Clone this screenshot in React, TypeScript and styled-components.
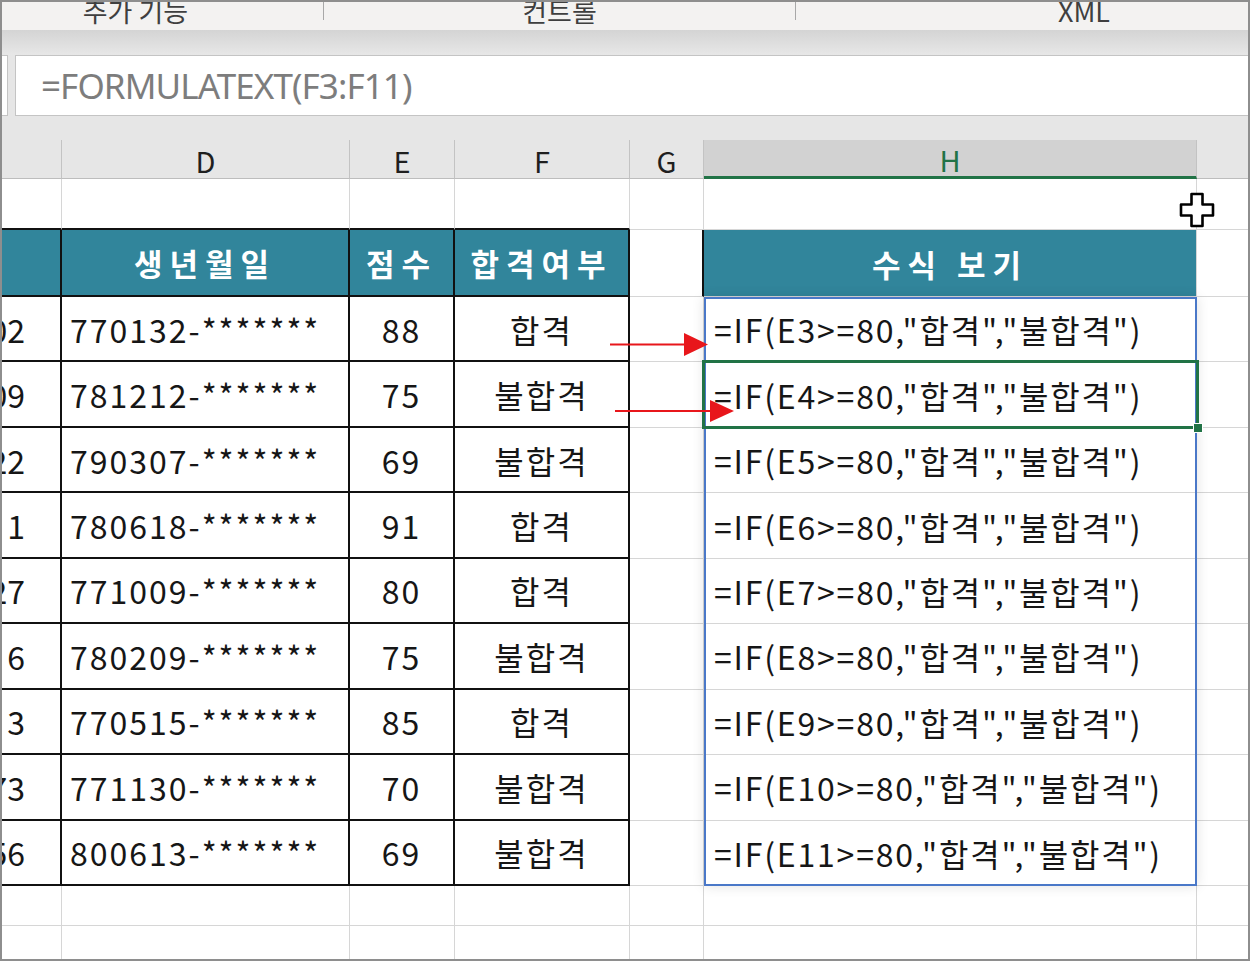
import React from 'react';
import styled, { createGlobalStyle } from 'styled-components';

const GlobalStyle = createGlobalStyle`
  html, body { margin: 0; padding: 0; background: #fff; }
  body {
    width: 1250px; height: 961px; overflow: hidden;
    font-family: "Noto Sans CJK KR", "Noto Sans", sans-serif;
  }
  * { box-sizing: border-box; }
`;

const Frame = styled.div`
  width: 1250px;
  height: 961px;
  border: 2px solid #8e8e8e;
  display: flex;
  flex-direction: column;
  overflow: hidden;
  background: #fff;
`;

const Ribbon = styled.div`
  height: 28px;
  flex: none;
  display: flex;
  background: #f3f2f1;
  overflow: hidden;
`;

const RibbonGroup = styled.div<{ $w?: number; $padL?: number; $padR?: number }>`
  flex: ${p => (p.$w ? `0 0 ${p.$w}px` : '1')};
  display: flex;
  justify-content: center;
  align-items: flex-end;
  padding-left: ${p => p.$padL ?? 0}px;
  padding-right: ${p => p.$padR ?? 0}px;
`;

const RibbonLabel = styled.span`
  font-family: "Noto Sans CJK KR", sans-serif;
  font-size: 27px;
  line-height: 1;
  color: #3f3f3f;
  margin-bottom: 6px;
  white-space: nowrap;
`;

const RibbonSep = styled.div`
  flex: none;
  width: 1px;
  height: 18px;
  background: #a8a8a8;
`;

const ToolShade = styled.div`
  height: 25px;
  flex: none;
  background: linear-gradient(#d4d4d4, #e7e7e7);
`;

const FormulaRow = styled.div`
  height: 61px;
  flex: none;
  display: flex;
  gap: 7px;
  background: #e6e6e6;
`;

const NameBoxStub = styled.div`
  width: 6px;
  background: #fff;
  border: 1px solid #c4c4c4;
  border-left: none;
`;

const FormulaBox = styled.div`
  flex: 1;
  display: flex;
  align-items: center;
  background: #fff;
  border: 1px solid #c4c4c4;
  border-right: none;
  padding-left: 25px;
  font-family: "Noto Sans", sans-serif;
  font-size: 35px;
  letter-spacing: -0.9px;
  color: #7d7d7d;
`;

const Gap = styled.div`
  height: 24px;
  flex: none;
  background: #e6e6e6;
`;

const Sheet = styled.div`
  flex: 1;
  position: relative;
  display: grid;
  grid-template-columns: 60px 288px 105px 175px 74px 493px 1fr;
  grid-template-rows: 39px 51px 67px repeat(9, 65.44px) 40px 1fr;
  background: #e6e6e6;
`;

const ColHead = styled.div<{ $col: number; $active?: boolean; $last?: boolean }>`
  grid-row: 1;
  grid-column: ${p => p.$col};
  display: flex;
  align-items: center;
  justify-content: center;
  background: ${p => (p.$active ? '#d2d2d2' : '#e6e6e6')};
  color: ${p => (p.$active ? '#217346' : '#1f1f1f')};
  border-right: ${p => (p.$last ? 'none' : '1px solid #c3c3c3')};
  border-bottom: ${p => (p.$active ? '3px solid #217346' : '1px solid #bdbdbd')};
  font-size: 29px;
  line-height: 1;
  padding-top: 2px;
`;

type Line = 'grid' | 'bold' | 'none';
const lineCss = (l: Line | undefined) =>
  l === 'bold' ? '2px solid #111' : l === 'none' ? 'none' : '1px solid #d6d6d6';

const Cell = styled.div<{
  $row: number;
  $col: number;
  $align?: 'left' | 'center' | 'right';
  $head?: boolean;
  $right?: Line;
  $bottom?: Line;
  $padL?: number;
  $padR?: number;
  $spacing?: number;
}>`
  grid-row: ${p => p.$row};
  grid-column: ${p => p.$col};
  display: flex;
  align-items: center;
  justify-content: ${p =>
    p.$align === 'left' ? 'flex-start' : p.$align === 'right' ? 'flex-end' : 'center'};
  overflow: hidden;
  white-space: nowrap;
  background: ${p => (p.$head ? '#31859b' : '#fff')};
  color: ${p => (p.$head ? '#fff' : '#161616')};
  font-weight: ${p => (p.$head ? 700 : 400)};
  font-size: ${p => (p.$head ? 31 : 32)}px;
  letter-spacing: ${p => (p.$spacing ?? (p.$head ? 7 : 2))}px;
  border-right: ${p => lineCss(p.$right)};
  border-bottom: ${p => lineCss(p.$bottom)};
  padding-left: ${p => p.$padL ?? 0}px;
  padding-right: ${p => p.$padR ?? 0}px;
  line-height: 1;
`;

const CellText = styled.span`
  flex: none;
  white-space: pre;
`;

const RangeBox = styled.div`
  grid-column: 6 / 7;
  grid-row: 4 / 13;
  border: 2px solid #4a78c8;
  box-shadow: 0 0 12px rgba(0, 0, 0, 0.12);
  pointer-events: none;
  z-index: 1;
`;

const Selection = styled.div`
  grid-column: 6 / 7;
  grid-row: 5 / 6;
  margin: -2px -2px -1px -2px;
  border: 3px solid #217346;
  position: relative;
  pointer-events: none;
  z-index: 2;
`;

const FillHandle = styled.div`
  position: absolute;
  right: -7px;
  bottom: -7px;
  width: 10px;
  height: 10px;
  background: #217346;
  border: 1px solid #fff;
`;

const Arrows = styled.svg`
  position: absolute;
  left: 598px;
  top: 190px;
  z-index: 3;
  pointer-events: none;
`;

const Cursor = styled.svg`
  position: absolute;
  left: 1176px;
  top: 51px;
  z-index: 3;
  pointer-events: none;
`;

const rows = [
  ['002', '770132-*******', '88', '합격', 'E3'],
  ['009', '781212-*******', '75', '불합격', 'E4'],
  ['022', '790307-*******', '69', '불합격', 'E5'],
  ['  1', '780618-*******', '91', '합격', 'E6'],
  ['027', '771009-*******', '80', '합격', 'E7'],
  ['  6', '780209-*******', '75', '불합격', 'E8'],
  ['  3', '770515-*******', '85', '합격', 'E9'],
  ['073', '771130-*******', '70', '불합격', 'E10'],
  ['056', '800613-*******', '69', '불합격', 'E11'],
];

const cols = ['', 'D', 'E', 'F', 'G', 'H', ''];

export default function App() {
  return (
    <>
      <GlobalStyle />
      <Frame>
        <Ribbon>
          <RibbonGroup $w={321} $padR={54}>
            <RibbonLabel>추가 기능</RibbonLabel>
          </RibbonGroup>
          <RibbonSep />
          <RibbonGroup $w={471}>
            <RibbonLabel>컨트롤</RibbonLabel>
          </RibbonGroup>
          <RibbonSep />
          <RibbonGroup $padL={124}>
            <RibbonLabel>XML</RibbonLabel>
          </RibbonGroup>
        </Ribbon>
        <ToolShade />
        <FormulaRow>
          <NameBoxStub />
          <FormulaBox>=FORMULATEXT(F3:F11)</FormulaBox>
        </FormulaRow>
        <Gap />
        <Sheet>
          {cols.map((c, i) => (
            <ColHead key={`h${i}`} $col={i + 1} $active={c === 'H'} $last={i === cols.length - 1}>
              {c}
            </ColHead>
          ))}

          {/* row 1 */}
          {cols.map((_, i) => (
            <Cell
              key={`r1${i}`}
              $row={2}
              $col={i + 1}
              $bottom={i <= 3 ? 'bold' : 'grid'}
              $right={i === 6 ? 'none' : 'grid'}
            />
          ))}

          {/* row 2: table headers */}
          <Cell $row={3} $col={1} $head $right="bold" $bottom="bold" />
          <Cell $row={3} $col={2} $head $right="bold" $bottom="bold">생년월일</Cell>
          <Cell $row={3} $col={3} $head $right="bold" $bottom="bold">점수</Cell>
          <Cell $row={3} $col={4} $head $right="bold" $bottom="bold">합격여부</Cell>
          <Cell $row={3} $col={5} $right="bold" />
          <Cell $row={3} $col={6} $head>수식 보기</Cell>
          <Cell $row={3} $col={7} $right="none" />

          {rows.map(([c, d, e, f, ref], i) => {
            const r = i + 4;
            return (
              <React.Fragment key={ref}>
                <Cell
                  $row={r}
                  $col={1}
                  $align="right"
                  $padR={35}
                  $spacing={0}
                  $right="bold"
                  $bottom="bold"
                >
                  <CellText>{c}</CellText>
                </Cell>
                <Cell $row={r} $col={2} $align="left" $padL={8} $right="bold" $bottom="bold">
                  <CellText>{d}</CellText>
                </Cell>
                <Cell $row={r} $col={3} $right="bold" $bottom="bold">{e}</Cell>
                <Cell $row={r} $col={4} $right="bold" $bottom="bold">{f}</Cell>
                <Cell $row={r} $col={5} />
                <Cell $row={r} $col={6} $align="left" $padL={10} $spacing={1.8}>
                  <CellText>{`=IF(${ref}>=80,"합격","불합격")`}</CellText>
                </Cell>
                <Cell $row={r} $col={7} $right="none" />
              </React.Fragment>
            );
          })}

          {[13, 14].map(r =>
            cols.map((_, i) => (
              <Cell
                key={`e${r}${i}`}
                $row={r}
                $col={i + 1}
                $right={i === 6 ? 'none' : 'grid'}
                $bottom={r === 14 ? 'none' : 'grid'}
              />
            ))
          )}

          <RangeBox />
          <Selection>
            <FillHandle />
          </Selection>

          <Arrows width="140" height="100" viewBox="0 0 140 100">
            <line x1="10" y1="14.5" x2="88" y2="14.5" stroke="#e8161b" strokeWidth="2" />
            <polygon points="84,3 108,14.5 84,26" fill="#e8161b" />
            <line x1="15" y1="81" x2="114" y2="81" stroke="#e8161b" strokeWidth="2" />
            <polygon points="110,70 134,81 110,92" fill="#e8161b" />
          </Arrows>

          <Cursor width="38" height="38" viewBox="0 0 38 38">
            <path
              d="M13.5 3 H24.5 V13.5 H35 V24.5 H24.5 V35 H13.5 V24.5 H3 V13.5 H13.5 Z"
              fill="#fff"
              stroke="#000"
              strokeWidth="2.6"
              strokeLinejoin="round"
            />
          </Cursor>
        </Sheet>
      </Frame>
    </>
  );
}
